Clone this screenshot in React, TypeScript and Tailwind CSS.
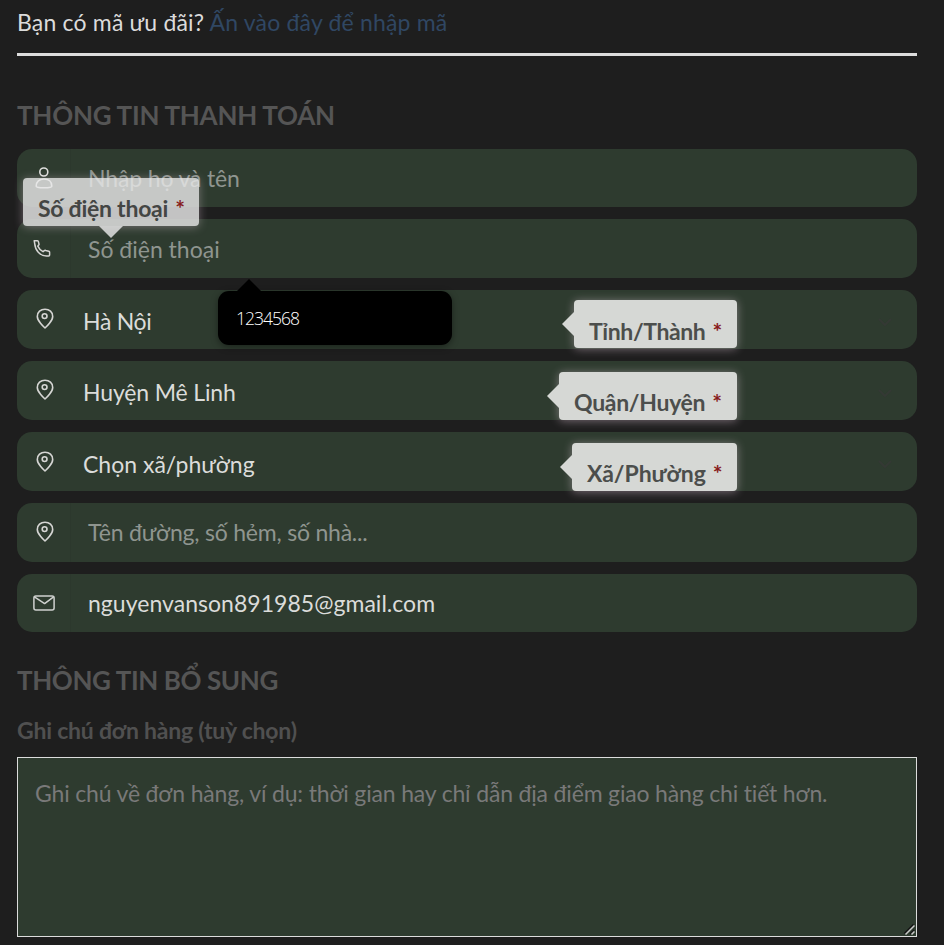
import type { ReactNode } from "react";

const PinIcon = () => (
  <svg width="18" height="22" viewBox="0 0 18 22" fill="none" stroke="#d6d6d4" strokeWidth="1.6">
    <path d="M9 20C7.3 18.6 1.3 12.8 1.3 8.4C1.3 4 4.7 1.2 9 1.2S16.7 4 16.7 8.4C16.7 12.8 10.7 18.6 9 20Z" strokeLinejoin="round" />
    <circle cx="8.6" cy="8.1" r="2.4" />
  </svg>
);

const UserIcon = () => (
  <svg width="18" height="22" viewBox="0 0 18 22" fill="none" stroke="#dededc" strokeWidth="1.6">
    <circle cx="8.8" cy="5" r="4" />
    <path d="M1.2 19.2C1.2 14.8 4.4 12 9 12S16.8 14.8 16.8 19.2C16.8 20.3 14 20.7 9 20.7S1.2 20.3 1.2 19.2Z" />
  </svg>
);

const PhoneIcon = () => (
  <svg width="18" height="18" viewBox="0 0 18 18" fill="none" stroke="#d6d6d4" strokeWidth="1.5" strokeLinejoin="round">
    <path d="M1.2 1.7H4.4Q5.3 1.7 5.4 2.6L6 5.1Q6.2 5.9 5.4 6.3L4.8 7.1Q6.6 11 10 12.7L11.3 11.6Q11.9 11.1 12.7 11.5L15.8 12.3Q16.6 12.5 16.6 13.3V16.1Q16.6 17 15.7 17H13.5C6.8 16.8 2.2 11.1 1.7 4.6Z" />
  </svg>
);

const MailIcon = () => (
  <svg width="22" height="16" viewBox="0 0 22 16" fill="none" stroke="#cfd1cf" strokeWidth="1.5" strokeLinejoin="round">
    <rect x="0.9" y="0.9" width="20.2" height="14.2" rx="2" />
    <path d="M1.4 1.8L11.6 8.6L20.6 1.8" />
  </svg>
);

const Chevron = () => (
  <svg width="14" height="9" viewBox="0 0 14 9" fill="none" stroke="#343934" strokeWidth="2">
    <path d="M1 1L7 7L13 1" />
  </svg>
);

const ResizeGrip = () => (
  <svg className="absolute bottom-[2px] right-[2px]" width="11" height="11" viewBox="0 0 11 11" fill="none">
    <path d="M0.5 9.5L9.5 0.5M6 10L10 6" stroke="#151515" strokeWidth="1.6" />
    <path d="M1.5 10.5L10.5 1.5M7.5 10.5L10.5 7.5" stroke="#c8cac8" strokeWidth="1.5" />
  </svg>
);

const Star = () => <span className="ml-[7px] tracking-normal text-[#881c1c]">*</span>;

type FieldProps = {
  height?: string;
  icon: ReactNode;
  iconPad: string;
  textPad: string;
  tone?: string;
  divided?: boolean;
  text: ReactNode;
  children?: ReactNode;
};

function Field({ height = "h-[59px]", icon, iconPad, textPad, tone = "text-[#dbdcda]", divided, text, children }: FieldProps) {
  return (
    <div className={`relative flex rounded-[15px] bg-[#2e3b2f] ${height}`}>
      <div className={`flex h-full w-[54px] shrink-0 justify-center ${iconPad} ${divided ? "border-r border-[#2c382d]" : ""}`}>
        {icon}
      </div>
      <div className={`whitespace-nowrap text-[23px] leading-[30px] ${textPad} ${tone}`}>{text}</div>
      {children}
    </div>
  );
}

function SideTip({ label, place, spacing }: { label: ReactNode; place: string; spacing: string }) {
  return (
    <div className={`absolute right-[180px] h-[48px] rounded-[4px] bg-[#d6d8d5] pl-[15px] shadow-[0_1px_10px_rgba(255,225,245,0.4)] ${place}`}>
      <span className="absolute -left-[12px] top-[12px] h-0 w-0 border-y-[12px] border-r-[12px] border-y-transparent border-r-[#d6d8d5]" />
      <div className="whitespace-nowrap text-[23px] font-bold leading-[30px] text-[#4c4e4c]">
        <span className={spacing}>{label}</span>
        <Star />
      </div>
    </div>
  );
}

export default function App() {
  return (
    <div className="h-[945px] w-[944px] overflow-hidden bg-[#1e1e1e] pl-[17px] pr-[27px] font-['Lato',sans-serif]">
      <div className="h-[56px] whitespace-nowrap border-b-[3px] border-[#dcdcdc] pt-[7px] text-[23px] leading-[30px] tracking-[0.18px] text-[#dbdbdb]">
        Bạn có mã ưu đãi? <a className="text-[#304763]">Ấn vào đây để nhập mã</a>
      </div>
      <h2 className="mt-[42px] h-[51px] whitespace-nowrap text-[26px] font-bold leading-[34px] tracking-[-0.25px] text-[#555]">THÔNG TIN THANH TOÁN</h2>

      <div className="flex flex-col gap-[12px]">
        <Field height="h-[58px]" divided icon={<UserIcon />} iconPad="pt-[18px] pl-px" textPad="pl-[17px] pt-[14px] tracking-[-0.14px]" tone="text-[#8f958f]" text="Nhập họ và tên" />
        <Field divided icon={<PhoneIcon />} iconPad="pt-[20px] pr-[4px]" textPad="pl-[17px] pt-[15px]" tone="text-[#8f958f]" text="Số điện thoại">
          <div className="absolute left-[6px] top-[-41px] h-[48px] w-[176px]">
            <div className="h-[48px] rounded-[4px] bg-[rgba(232,232,232,0.82)] pl-[15px] pt-[15px] shadow-[0_1px_10px_rgba(255,225,245,0.35)]">
              <div className="whitespace-nowrap text-[23px] font-bold leading-[30px] text-[#444644]">
                <span className="tracking-[-0.25px]">Số điện thoại</span>
                <Star />
              </div>
            </div>
            <span className="absolute left-[76px] top-[48px] h-0 w-0 border-x-[12px] border-t-[12px] border-x-transparent border-t-[rgba(232,232,232,0.82)]" />
          </div>
          <div className="absolute left-[201px] top-[72px] z-10 h-[54px] w-[234px] rounded-[11px] bg-black pl-[18px] pt-[16px] shadow-[0_2px_7px_rgba(0,0,0,0.4)]">
            <span className="absolute left-[18px] top-[-12px] h-0 w-0 border-x-[13px] border-b-[13px] border-x-transparent border-b-black" />
            <div className="font-['Open_Sans',sans-serif] text-[17.5px] font-light leading-[22px] tracking-[-1px] text-white">1234568</div>
          </div>
        </Field>
        <Field icon={<PinIcon />} iconPad="pt-[18px] pl-px" textPad="pl-[12px] pt-[16px] tracking-[-0.3px]" text="Hà Nội">
          <div className="ml-auto mr-[25px] mt-[28px]"><Chevron /></div>
          <SideTip place="top-[10px] w-[163px] pt-[16px]" spacing="tracking-[-0.4px]" label="Tỉnh/Thành" />
        </Field>
        <Field icon={<PinIcon />} iconPad="pt-[18px] pl-px" textPad="pl-[12px] pt-[16px] tracking-[-0.15px]" text="Huyện Mê Linh">
          <div className="ml-auto mr-[25px] mt-[28px]"><Chevron /></div>
          <SideTip place="top-[11px] w-[178px] pt-[15px]" spacing="tracking-[-0.3px]" label="Quận/Huyện" />
        </Field>
        <Field icon={<PinIcon />} iconPad="pt-[19px] pl-px" textPad="pl-[12px] pt-[17px]" text="Chọn xã/phường">
          <div className="ml-auto mr-[25px] mt-[28px]"><Chevron /></div>
          <SideTip place="top-[11px] w-[165px] pt-[15px]" spacing="tracking-[-0.05px]" label="Xã/Phường" />
        </Field>
        <Field divided icon={<PinIcon />} iconPad="pt-[18px] pl-[2px]" textPad="pl-[17px] pt-[14px] tracking-[-0.21px]" tone="text-[#8f958f]" text="Tên đường, số hẻm, số nhà..." />
        <Field height="h-[58px]" divided icon={<MailIcon />} iconPad="pt-[21px] pl-px" textPad="pl-[17px] pt-[14px] tracking-[0.03px]" text="nguyenvanson891985@gmail.com" />
      </div>

      <h2 className="mt-[31px] h-[52px] whitespace-nowrap text-[26px] font-bold leading-[34px] tracking-[-0.4px] text-[#555]">THÔNG TIN BỔ SUNG</h2>
      <div className="h-[42px] whitespace-nowrap text-[23px] font-bold leading-[30px] tracking-[-0.22px] text-[#505050]">Ghi chú đơn hàng (tuỳ chọn)</div>
      <div className="relative h-[180px] w-[900px]">
        <textarea
          className="block h-[180px] w-[900px] resize-none overflow-hidden border border-[#dcdcdc] bg-[#2e3b2f] px-[17px] pt-[20px] text-[23px] leading-[30px] tracking-[-0.17px] placeholder:text-[#797979]"
          placeholder="Ghi chú về đơn hàng, ví dụ: thời gian hay chỉ dẫn địa điểm giao hàng chi tiết hơn."
        />
        <ResizeGrip />
      </div>
    </div>
  );
}
